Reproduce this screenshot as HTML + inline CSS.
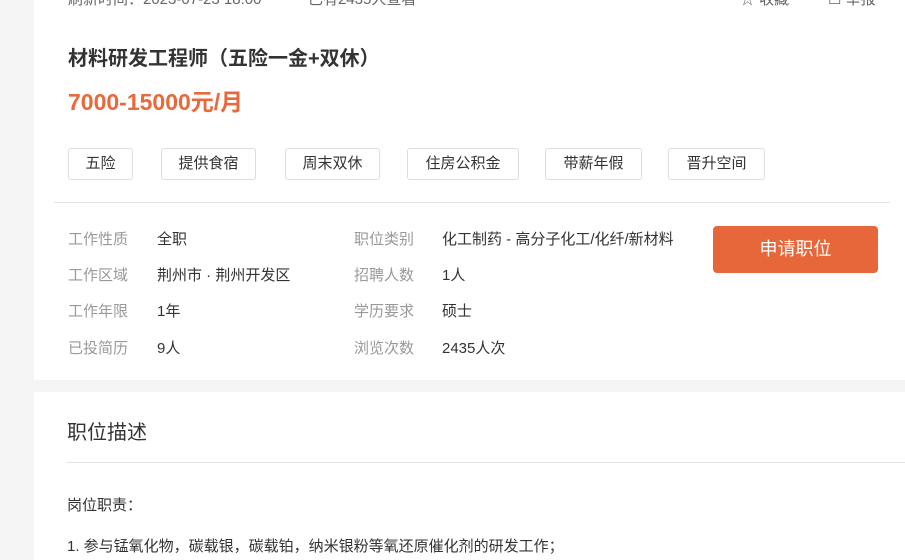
<!DOCTYPE html>
<html><head><meta charset="utf-8"><style>
*{margin:0;padding:0;box-sizing:border-box}
body{width:905px;height:560px;overflow:hidden;background:#f5f5f5;font-family:"Liberation Sans","Noto Sans CJK SC",sans-serif;color:#333;position:relative}
.a{position:absolute;white-space:nowrap}
.card1{position:absolute;left:34px;top:0;width:871px;height:380px;background:#fff}
.card2{position:absolute;left:34px;top:392px;width:871px;height:168px;background:#fff}
.tag{position:absolute;top:148px;height:32px;border:1px solid #ddd;border-radius:3px;font-size:15px;line-height:30px;text-align:center;color:#333}
.l{color:#999;font-size:15px}
.v{color:#333;font-size:15px}
</style></head><body>
<div class="card1"></div>
<div class="card2"></div>
<div class="a" style="left:68px;top:-12px;font-size:15px;color:#666">刷新时间：2023-07-23 18:00</div>
<div class="a" style="left:308px;top:-12px;font-size:15px;color:#666">已有2435人查看</div>
<div class="a" style="left:740px;top:-12px;font-size:15px;color:#666">☆ 收藏</div>
<div class="a" style="left:828px;top:-12px;font-size:15px;color:#666">☐ 举报</div>
<div class="a" style="left:68px;top:42px;font-size:20px;font-weight:bold;color:#333">材料研发工程师（五险一金+双休）</div>
<div class="a" style="left:68px;top:83px;font-size:23px;font-weight:bold;color:#e8693b">7000-15000元/月</div>
<div class="tag" style="left:68px;width:65px">五险</div>
<div class="tag" style="left:161px;width:95px">提供食宿</div>
<div class="tag" style="left:285px;width:95px">周末双休</div>
<div class="tag" style="left:407px;width:112px">住房公积金</div>
<div class="tag" style="left:545px;width:97px">带薪年假</div>
<div class="tag" style="left:668px;width:97px">晋升空间</div>
<div class="a" style="left:54px;top:202px;width:836px;height:1px;background:#e5e5e5"></div>
<div class="a l" style="left:68px;top:228px">工作性质</div><div class="a v" style="left:157px;top:228px">全职</div>
<div class="a l" style="left:68px;top:264px">工作区域</div><div class="a v" style="left:157px;top:264px">荆州市 · 荆州开发区</div>
<div class="a l" style="left:68px;top:300px">工作年限</div><div class="a v" style="left:157px;top:300px">1年</div>
<div class="a l" style="left:68px;top:337px">已投简历</div><div class="a v" style="left:157px;top:337px">9人</div>
<div class="a l" style="left:354px;top:228px">职位类别</div><div class="a v" style="left:442px;top:228px">化工制药 - 高分子化工/化纤/新材料</div>
<div class="a l" style="left:354px;top:264px">招聘人数</div><div class="a v" style="left:442px;top:264px">1人</div>
<div class="a l" style="left:354px;top:300px">学历要求</div><div class="a v" style="left:442px;top:300px">硕士</div>
<div class="a l" style="left:354px;top:337px">浏览次数</div><div class="a v" style="left:442px;top:337px">2435人次</div>
<div class="a" style="left:713px;top:226px;width:165px;height:47px;background:#e8673a;border-radius:4px;color:#fff;font-size:18px;line-height:47px;text-align:center">申请职位</div>
<div class="a" style="left:67px;top:416px;font-size:20px;color:#333">职位描述</div>
<div class="a" style="left:66px;top:462px;width:839px;height:1px;background:#e5e5e5"></div>
<div class="a" style="left:67px;top:494px;font-size:15px">岗位职责：</div>
<div class="a" style="left:67px;top:535px;font-size:15px">1. 参与锰氧化物，碳载银，碳载铂，纳米银粉等氧还原催化剂的研发工作；</div>
</body></html>
